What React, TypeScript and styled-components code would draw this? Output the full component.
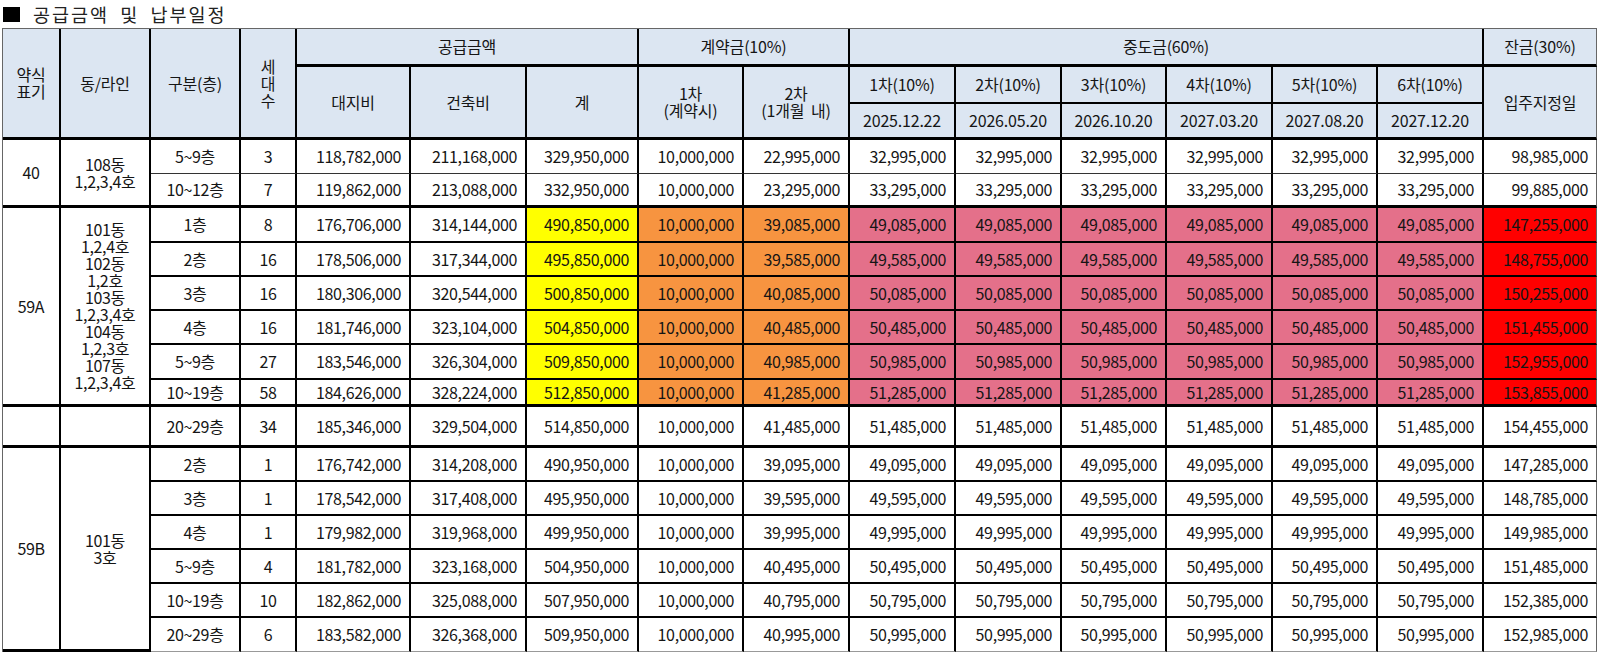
import React from "react";
import styled, { createGlobalStyle } from "styled-components";

const Global = createGlobalStyle`
  html, body { margin: 0; padding: 0; background: #fff; }
  body { font-family: "Noto Sans CJK KR", "Noto Sans", sans-serif; color: #151515; }
`;

const Page = styled.div`
  padding: 0 0 0 2px;
  width: 1598px;
`;

const Title = styled.h1`
  margin: 0;
  height: 28px;
  display: flex;
  align-items: center;
  gap: 13px;
  font-size: 18.5px;
  font-weight: 400;
  letter-spacing: 2px;
  color: #222;
  padding-left: 1px;
  word-spacing: 5px;
`;

const Square = styled.span`
  display: inline-block;
  width: 17px;
  height: 15px;
  background: #000;
`;

const Table = styled.table`
  border-collapse: separate;
  border-spacing: 0;
  table-layout: fixed;
  width: 1595px;
  border-top: 1px solid #666;
  border-left: 1px solid #666;
  font-size: 16px;
`;

const Row = styled.tr<{ $h: number }>`
  height: ${(p) => p.$h}px;
`;

const Head = styled.th<{ $last?: boolean; $bb?: number }>`
  background: #dce6f2;
  font-weight: 400;
  text-align: center;
  vertical-align: middle;
  padding: 0 2px;
  line-height: 17px;
  white-space: pre-line;
  border-right: ${(p) => (p.$last ? "1px solid #666" : "2px solid #000")};
  border-bottom: ${(p) => p.$bb ?? 2}px solid #000;
  letter-spacing: -0.2px;
`;

const Cell = styled.td<{
  $bg?: string;
  $num?: boolean;
  $last?: boolean;
  $bb?: number;
  $bc?: string;
}>`
  background: ${(p) => p.$bg ?? "#fff"};
  text-align: ${(p) => (p.$num ? "right" : "center")};
  vertical-align: middle;
  padding: ${(p) => (p.$num ? "0 8px 0 0" : "0 2px")};
  line-height: 17px;
  white-space: pre-line;
  border-right: ${(p) => (p.$last ? "1px solid #666" : "2px solid #000")};
  border-bottom: ${(p) => p.$bb ?? 2}px solid ${(p) => p.$bc ?? "#000"};
  letter-spacing: -0.35px;
  overflow: hidden;
`;

const widths = [58, 90, 90, 56, 114, 116, 112, 105, 106, 106, 106, 105, 106, 105, 106, 113];

type Line = {
  floor: string;
  units: string;
  land: string;
  build: string;
  total: string;
  c2: string;
  mid: string;
  bal: string;
  h: number;
};

type Group = {
  code: string;
  line: string;
  hot?: boolean;
  rows: Line[];
  split?: boolean;
};

const YELLOW = "#ffff00";
const ORANGE = "#f79440";
const PINK = "#e4708a";
const RED = "#ff0000";

const groups: Group[] = [
  {
    code: "40",
    line: "108동\n1,2,3,4호",
    rows: [
      { floor: "5~9층", units: "3", land: "118,782,000", build: "211,168,000", total: "329,950,000", c2: "22,995,000", mid: "32,995,000", bal: "98,985,000", h: 34 },
      { floor: "10~12층", units: "7", land: "119,862,000", build: "213,088,000", total: "332,950,000", c2: "23,295,000", mid: "33,295,000", bal: "99,885,000", h: 34 },
    ],
  },
  {
    code: "59A",
    line: "101동\n1,2,4호\n102동\n1,2호\n103동\n1,2,3,4호\n104동\n1,2,3호\n107동\n1,2,3,4호",
    hot: true,
    rows: [
      { floor: "1층", units: "8", land: "176,706,000", build: "314,144,000", total: "490,850,000", c2: "39,085,000", mid: "49,085,000", bal: "147,255,000", h: 35 },
      { floor: "2층", units: "16", land: "178,506,000", build: "317,344,000", total: "495,850,000", c2: "39,585,000", mid: "49,585,000", bal: "148,755,000", h: 34 },
      { floor: "3층", units: "16", land: "180,306,000", build: "320,544,000", total: "500,850,000", c2: "40,085,000", mid: "50,085,000", bal: "150,255,000", h: 34 },
      { floor: "4층", units: "16", land: "181,746,000", build: "323,104,000", total: "504,850,000", c2: "40,485,000", mid: "50,485,000", bal: "151,455,000", h: 34 },
      { floor: "5~9층", units: "27", land: "183,546,000", build: "326,304,000", total: "509,850,000", c2: "40,985,000", mid: "50,985,000", bal: "152,955,000", h: 35 },
      { floor: "10~19층", units: "58", land: "184,626,000", build: "328,224,000", total: "512,850,000", c2: "41,285,000", mid: "51,285,000", bal: "153,855,000", h: 27 },
    ],
  },
  {
    code: "",
    line: "",
    split: true,
    rows: [
      { floor: "20~29층", units: "34", land: "185,346,000", build: "329,504,000", total: "514,850,000", c2: "41,485,000", mid: "51,485,000", bal: "154,455,000", h: 41 },
    ],
  },
  {
    code: "59B",
    line: "101동\n3호",
    rows: [
      { floor: "2층", units: "1", land: "176,742,000", build: "314,208,000", total: "490,950,000", c2: "39,095,000", mid: "49,095,000", bal: "147,285,000", h: 34 },
      { floor: "3층", units: "1", land: "178,542,000", build: "317,408,000", total: "495,950,000", c2: "39,595,000", mid: "49,595,000", bal: "148,785,000", h: 34 },
      { floor: "4층", units: "1", land: "179,982,000", build: "319,968,000", total: "499,950,000", c2: "39,995,000", mid: "49,995,000", bal: "149,985,000", h: 34 },
      { floor: "5~9층", units: "4", land: "181,782,000", build: "323,168,000", total: "504,950,000", c2: "40,495,000", mid: "50,495,000", bal: "151,485,000", h: 34 },
      { floor: "10~19층", units: "10", land: "182,862,000", build: "325,088,000", total: "507,950,000", c2: "40,795,000", mid: "50,795,000", bal: "152,385,000", h: 34 },
      { floor: "20~29층", units: "6", land: "183,582,000", build: "326,368,000", total: "509,950,000", c2: "40,995,000", mid: "50,995,000", bal: "152,985,000", h: 34 },
    ],
  },
];

const midHeads = ["1차(10%)", "2차(10%)", "3차(10%)", "4차(10%)", "5차(10%)", "6차(10%)"];
const dates = ["2025.12.22", "2026.05.20", "2026.10.20", "2027.03.20", "2027.08.20", "2027.12.20"];

export default function App() {
  return (
    <Page>
      <Global />
      <Title>
        <Square />
        <span>공급금액 및 납부일정</span>
      </Title>
      <Table>
        <colgroup>
          {widths.map((w, i) => (
            <col key={i} style={{ width: w }} />
          ))}
        </colgroup>
        <thead>
          <Row $h={38}>
            <Head rowSpan={3} $bb={3}>{"약식\n표기"}</Head>
            <Head rowSpan={3} $bb={3}>동/라인</Head>
            <Head rowSpan={3} $bb={3}>구분(층)</Head>
            <Head rowSpan={3} $bb={3}>{"세\n대\n수"}</Head>
            <Head colSpan={3} $bb={3}>공급금액</Head>
            <Head colSpan={2} $bb={3}>계약금(10%)</Head>
            <Head colSpan={6} $bb={3}>중도금(60%)</Head>
            <Head $last $bb={3}>잔금(30%)</Head>
          </Row>
          <Row $h={37}>
            <Head rowSpan={2} $bb={3}>대지비</Head>
            <Head rowSpan={2} $bb={3}>건축비</Head>
            <Head rowSpan={2} $bb={3}>계</Head>
            <Head rowSpan={2} $bb={3}>{"1차\n(계약시)"}</Head>
            <Head rowSpan={2} $bb={3}>{"2차\n(1개월\u00a0\u00a0내)"}</Head>
            {midHeads.map((m) => (
              <Head key={m}>{m}</Head>
            ))}
            <Head rowSpan={2} $last $bb={3}>입주지정일</Head>
          </Row>
          <Row $h={36}>
            {dates.map((d) => (
              <Head key={d} $bb={3}>{d}</Head>
            ))}
          </Row>
        </thead>
        <tbody>
          {groups.map((g, gi) =>
            g.rows.map((r, ri) => {
              const lastRow = ri === g.rows.length - 1;
              const lastGroup = gi === groups.length - 1;
              const bb = lastRow ? (lastGroup ? 1 : 3) : g.code === "40" ? 1 : 2;
              const bc = lastRow && lastGroup ? "#999" : g.code === "40" && !lastRow ? "#333" : "#000";
              const hot = !!g.hot;
              return (
                <Row key={`${gi}-${ri}`} $h={r.h}>
                  {ri === 0 && (
                    <>
                      <Cell rowSpan={g.split ? 1 : g.rows.length} $bb={3}>{g.code}</Cell>
                      <Cell rowSpan={g.split ? 1 : g.rows.length} $bb={3}>{g.line}</Cell>
                    </>
                  )}
                  <Cell $bb={bb} $bc={bc}>{r.floor}</Cell>
                  <Cell $bb={bb} $bc={bc}>{r.units}</Cell>
                  <Cell $num $bb={bb} $bc={bc}>{r.land}</Cell>
                  <Cell $num $bb={bb} $bc={bc}>{r.build}</Cell>
                  <Cell $num $bb={bb} $bc={bc} $bg={hot ? YELLOW : undefined}>{r.total}</Cell>
                  <Cell $num $bb={bb} $bc={bc} $bg={hot ? ORANGE : undefined}>10,000,000</Cell>
                  <Cell $num $bb={bb} $bc={bc} $bg={hot ? ORANGE : undefined}>{r.c2}</Cell>
                  {midHeads.map((m) => (
                    <Cell key={m} $num $bb={bb} $bc={bc} $bg={hot ? PINK : undefined}>{r.mid}</Cell>
                  ))}
                  <Cell $num $last $bb={bb} $bc={bc} $bg={hot ? RED : undefined}>{r.bal}</Cell>
                </Row>
              );
            })
          )}
        </tbody>
      </Table>
    </Page>
  );
}
